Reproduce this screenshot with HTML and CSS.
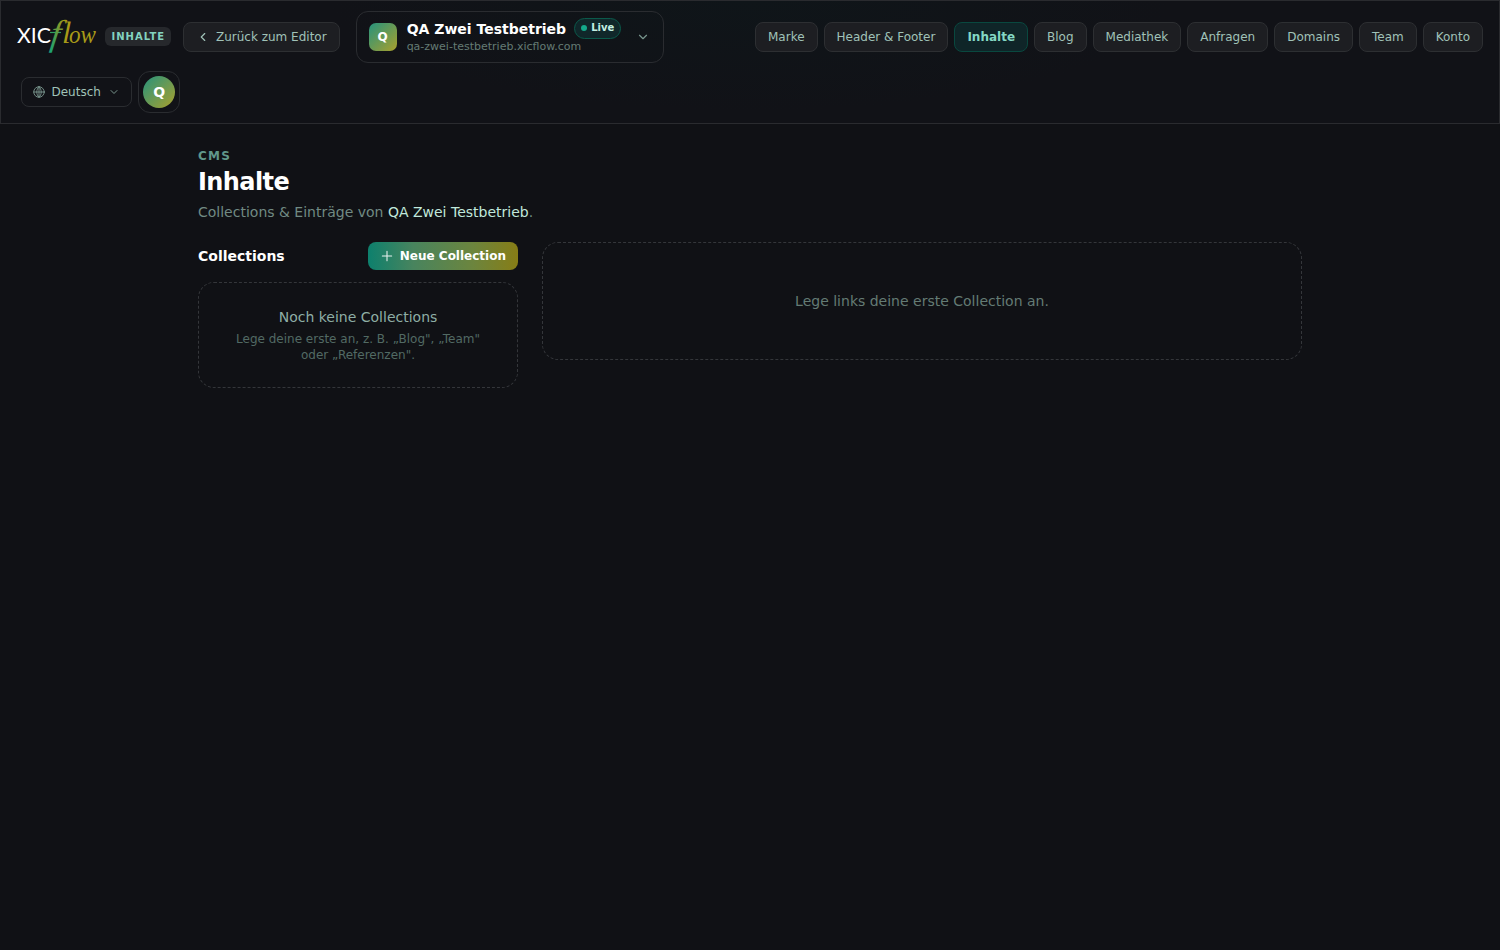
FILE: index.html
```html
<!DOCTYPE html>
<html lang="de">
<head>
  <meta charset="UTF-8">
  <meta name="viewport" content="width=device-width, initial-scale=1.0">
  <title>Inhalte – XICflow</title>
  <link rel="stylesheet" href="styles.css">
</head>
<body>

  <header class="topbar">
    <div class="brand">
      <svg class="logo" width="80" height="38" viewBox="0 0 80 38" role="img" aria-label="XICflow">
        <defs>
          <linearGradient id="flowGradient" gradientUnits="userSpaceOnUse" x1="-4" y1="6" x2="18" y2="-20">
            <stop offset="0" stop-color="#12a37c"/>
            <stop offset="0.5" stop-color="#4c9c4c"/>
            <stop offset="1" stop-color="#a89a18"/>
          </linearGradient>
        </defs>
        <text class="logo-xic" x="0" y="25" textLength="34" lengthAdjust="spacingAndGlyphs">XIC</text>
        <path class="logo-bar" d="M33 14.500h11"/>
        <text class="logo-f" transform="translate(32.500 27) skewX(-8)">f</text>
        <text class="logo-l" transform="translate(45 25) skewX(-2)">l</text>
        <text class="logo-ow" x="52" y="25" textLength="27" lengthAdjust="spacingAndGlyphs">ow</text>
      </svg>
      <span class="area-tag">INHALTE</span>
    </div>

    <a class="btn back" href="#">
      <svg width="14" height="14" viewBox="0 0 24 24" class="icon"><path d="M15 18l-6-6 6-6"/></svg>
      Zurück zum Editor
    </a>

    <button class="switcher">
      <span class="avatar square">Q</span>
      <span class="site">
        <span class="site-top">
          <span class="site-name">QA Zwei Testbetrieb</span>
          <span class="live"><i class="dot"></i>Live</span>
        </span>
        <span class="site-url">qa-zwei-testbetrieb.xicflow.com</span>
      </span>
      <svg width="14" height="14" viewBox="0 0 24 24" class="icon muted"><path d="M6 9l6 6 6-6"/></svg>
    </button>

    <nav class="nav">
      <a class="btn" href="#">Marke</a>
      <a class="btn" href="#">Header &amp; Footer</a>
      <a class="btn active" href="#">Inhalte</a>
      <a class="btn" href="#">Blog</a>
      <a class="btn" href="#">Mediathek</a>
      <a class="btn" href="#">Anfragen</a>
      <a class="btn" href="#">Domains</a>
      <a class="btn" href="#">Team</a>
      <a class="btn" href="#">Konto</a>
    </nav>

    <div class="tools">
      <button class="language">
        <svg width="14" height="14" viewBox="0 0 24 24" class="icon globe"><circle cx="12" cy="12" r="9"/><path d="M3 12h18M12 3v18M12 3c2.500 2.600 3.800 5.600 3.800 9s-1.300 6.400-3.800 9c-2.500-2.600-3.800-5.600-3.800-9S9.500 5.600 12 3z"/></svg>
        <span>Deutsch</span>
        <svg width="12" height="12" viewBox="0 0 24 24" class="icon muted"><path d="M6 9l6 6 6-6"/></svg>
      </button>
      <button class="profile"><span class="avatar round">Q</span></button>
    </div>
  </header>

  <main class="page">
    <p class="eyebrow">CMS</p>
    <h1>Inhalte</h1>
    <p class="intro">Collections &amp; Einträge von <span>QA Zwei Testbetrieb</span>.</p>

    <div class="columns">
      <section>
        <div class="list-head">
          <h2>Collections</h2>
          <button class="create">
            <svg width="14" height="14" viewBox="0 0 24 24" class="icon"><path d="M12 4v16M4 12h16"/></svg>
            Neue Collection
          </button>
        </div>
        <div class="empty empty-list">
          <p class="empty-title">Noch keine Collections</p>
          <p class="empty-text">Lege deine erste an, z. B. „Blog", „Team" oder „Referenzen".</p>
        </div>
      </section>
      <section class="empty empty-detail">Lege links deine erste Collection an.</section>
    </div>
  </main>

</body>
</html>
```

FILE: styles.css
```css
* {
  box-sizing: border-box;
}
body {
  margin: 0;
  min-height: 100vh;
  background: #101115;
  color: #fff;
  font-family: "DejaVu Sans", sans-serif;
  font-size: 14px;
  line-height: 20px;
}
h1, h2, p {
  margin: 0;
}
a {
  text-decoration: none;
}
button {
  font: inherit;
  color: inherit;
  background: none;
  border: 0;
  padding: 0;
}
.icon {
  flex: none;
  fill: none;
  stroke: currentColor;
  stroke-width: 2;
  stroke-linecap: round;
  stroke-linejoin: round;
}
.muted {
  color: #78958d;
}

/* top bar */
.topbar {
  display: flex;
  flex-wrap: wrap;
  align-items: center;
  row-gap: 8px;
  height: 124px;
  padding: 10px 16px;
  border: 1px solid #2a2b2f;
  background: radial-gradient(ellipse 420px 110px at 50% 0, #0f1519, #111217);
}
.brand {
  display: flex;
  align-items: center;
  gap: 8px;
  margin-right: 12px;
}
.logo {
  display: block;
  overflow: visible;
}
.logo-xic {
  font-family: Lato, sans-serif;
  font-size: 21px;
  fill: #fff;
}
.logo-bar {
  stroke: #2f9f62;
  stroke-width: 1.2;
}
.logo-f,
.logo-l,
.logo-ow {
  font-family: "Liberation Serif", serif;
  font-style: italic;
  fill: #a89a18;
}
.logo-f {
  font-size: 36px;
  fill: url(#flowGradient);
}
.logo-l {
  font-size: 31px;
}
.logo-ow {
  font-size: 25px;
}
.area-tag {
  height: 19px;
  margin-top: -2px;
  padding: 0 5.5px 0 6.5px;
  border-radius: 6px;
  background: #26282c;
  color: #84d3c0;
  font-size: 10px;
  font-weight: bold;
  line-height: 19px;
  letter-spacing: 1px;
}
.btn {
  display: flex;
  align-items: center;
  height: 30px;
  padding: 0 12px;
  border: 1px solid #2d2f32;
  border-radius: 8px;
  background: #1d1e22;
  color: #a0c2b8;
  font-size: 12px;
  line-height: 16px;
}
.btn.active {
  border-color: #09483f;
  background: #0f2528;
  color: #84d8c5;
  font-weight: bold;
}
.back {
  gap: 6.4px;
}
.switcher {
  display: flex;
  align-items: center;
  width: 308px;
  height: 52px;
  margin-left: 16px;
  padding: 0 13px 0 12px;
  border: 1px solid #2a2c30;
  border-radius: 12px;
  text-align: left;
}
.avatar {
  display: flex;
  align-items: center;
  justify-content: center;
  background: linear-gradient(135deg, #26937d, #a9a02d);
  font-weight: bold;
}
.square {
  width: 28px;
  height: 28px;
  margin-right: 10px;
  border-radius: 7px;
  font-size: 12px;
}
.round {
  width: 32px;
  height: 32px;
  border-radius: 50%;
}
.site {
  flex: 1;
  padding-bottom: 2px;
}
.site-top {
  display: flex;
  align-items: center;
  gap: 8px;
  height: 21px;
}
.site-name {
  font-weight: bold;
}
.live {
  display: flex;
  align-items: center;
  gap: 4px;
  height: 21px;
  margin-top: -2px;
  padding: 0 6px;
  border: 1px solid #0b5a4b;
  border-radius: 11px;
  background: #10272a;
  color: #c3efe2;
  font-size: 10px;
  font-weight: bold;
}
.dot {
  width: 6px;
  height: 6px;
  border-radius: 50%;
  background: #14a98b;
}
.site-url {
  display: block;
  color: #647b74;
  font-size: 11px;
  line-height: 14px;
}
.nav {
  display: flex;
  gap: 6px;
  margin-left: auto;
}
.tools {
  display: flex;
  align-items: center;
  gap: 6px;
  padding-left: 4px;
}
.language {
  display: flex;
  align-items: center;
  height: 30px;
  padding: 0 11px 0 10px;
  border: 1px solid #2a2c30;
  border-radius: 8px;
  color: #a0c2b8;
  font-size: 12px;
}
.language span {
  margin: 0 7.2px 0 5.5px;
}
.globe {
  color: #78958d;
  stroke-width: 1.6;
}
.profile {
  display: flex;
  padding: 4px;
  border: 1px solid #2a2c30;
  border-radius: 12px;
}

/* content */
.page {
  width: 1104px;
  margin: 0 auto;
  padding-top: 24px;
}
.eyebrow {
  color: #60978a;
  font-size: 12px;
  font-weight: bold;
  line-height: 16px;
  letter-spacing: 1.2px;
}
h1 {
  margin-top: 2px;
  font-size: 24px;
  line-height: 32px;
  letter-spacing: -0.6px;
}
.intro {
  margin-top: 4px;
  color: #718a83;
}
.intro span {
  color: #c0e8dc;
}
.columns {
  display: grid;
  grid-template-columns: 320px 1fr;
  align-items: start;
  gap: 24px;
  margin-top: 20px;
}
.list-head {
  display: flex;
  align-items: center;
  justify-content: space-between;
  margin-bottom: 12px;
}
h2 {
  font-size: 14px;
  line-height: 20px;
}
.create {
  display: flex;
  align-items: center;
  gap: 6px;
  height: 28px;
  padding: 0 12px;
  border-radius: 8px;
  background: linear-gradient(90deg, #0d806d, #48845e 30%, #6c853e 70%, #877d16);
  font-size: 12px;
  font-weight: bold;
}
.create .icon {
  stroke-width: 1.8;
  opacity: 0.9;
}
.empty {
  border: 1px dashed #34363a;
  border-radius: 16px;
  text-align: center;
}
.empty-list {
  height: 106px;
  padding: 24px;
}
.empty-title {
  color: #8eaea5;
}
.empty-text {
  margin-top: 4px;
  color: #526a64;
  font-size: 12px;
  line-height: 16px;
}
.empty-detail {
  padding: 48px;
  color: #647b74;
}
```
